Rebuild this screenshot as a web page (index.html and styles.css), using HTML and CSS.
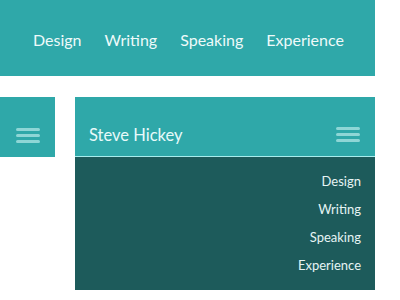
FILE: index.html
```html
<!DOCTYPE html>
<html lang="en">
<head>
    <meta charset="UTF-8">
    <meta name="viewport" content="width=device-width, initial-scale=1.0">
    <title>Steve Hickey - Navigation</title>
    <link rel="stylesheet" href="styles.css">
</head>
<body>

    <!-- Desktop nav -->
    <nav class="topnav">
        <a href="#">Design</a>
        <a href="#">Writing</a>
        <a href="#">Speaking</a>
        <a href="#">Experience</a>
    </nav>

    <div class="row">
        <!-- Collapsed nav -->
        <div class="mini">
            <span class="burger"><i></i><i></i><i></i></span>
        </div>

        <!-- Mobile nav, open -->
        <div class="card">
            <div class="card-head">
                <span class="name">Steve Hickey</span>
                <span class="burger"><i></i><i></i><i></i></span>
            </div>
            <div class="menu">
                <a href="#">Design</a>
                <a href="#">Writing</a>
                <a href="#">Speaking</a>
                <a href="#">Experience</a>
            </div>
        </div>
    </div>

</body>
</html>
```

FILE: styles.css
```css
body {
    font-family: Lato, "Liberation Sans", sans-serif;
    margin: 0;
    padding: 0;
    background-color: #fff;
}

a {
    color: #fff;
    text-decoration: none;
}

.topnav {
    width: 375px;
    height: 76px;
    box-sizing: border-box;
    padding: 3px 0 0 33px;
    display: flex;
    align-items: center;
    gap: 23px;
    background-color: #2fa8a9;
}

.topnav a {
    font-size: 16px;
    color: #eefafa;
}

.row {
    display: flex;
    gap: 20px;
    margin-top: 21px;
}

.mini {
    width: 55px;
    height: 60px;
    background-color: #2fa8a9;
    display: flex;
    align-items: center;
    justify-content: center;
    padding-top: 16px;
    box-sizing: border-box;
}

.burger {
    display: flex;
    flex-direction: column;
    gap: 3px;
    width: 24px;
}

.burger i {
    display: block;
    height: 3px;
    border-radius: 2px;
    background-color: #8ed6d6;
}

.card {
    width: 300px;
}

.card-head {
    height: 60px;
    box-sizing: border-box;
    padding: 16px 15px 0 14px;
    display: flex;
    align-items: center;
    justify-content: space-between;
    background-color: #2fa8a9;
    border-bottom: 1px solid #a8eeee;
}

.card-head .name {
    font-size: 16.5px;
    color: #e8fafa;
}

.menu {
    background-color: #1d5b5b;
    height: 133px;
    box-sizing: border-box;
    padding: 10px 14px 0 0;
    display: flex;
    flex-direction: column;
    align-items: flex-end;
}

.menu a {
    font-size: 13px;
    line-height: 28px;
    color: #e6f4f4;
}
```
